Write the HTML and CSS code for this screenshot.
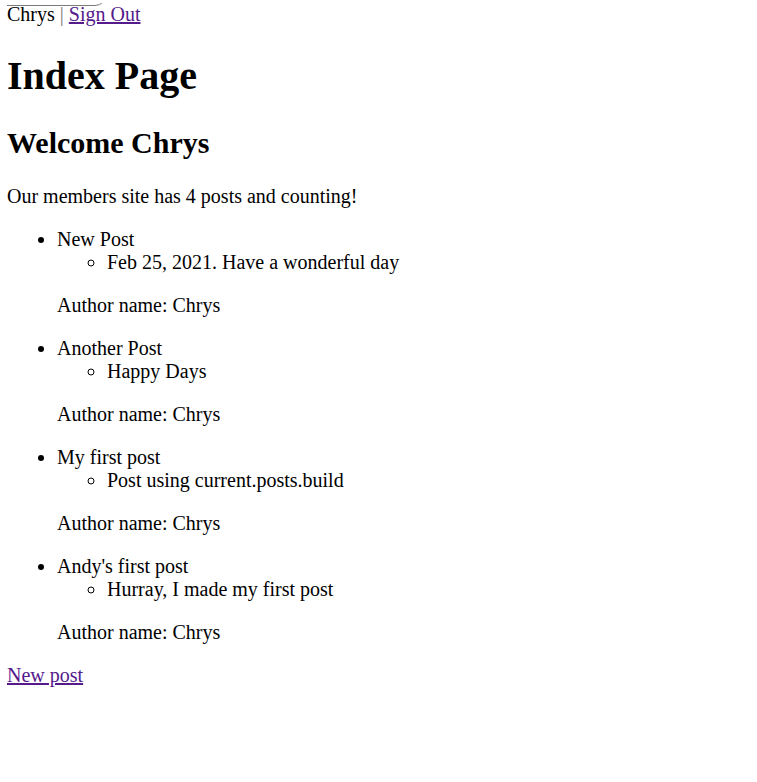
FILE: index.html
```html
<!DOCTYPE html>
<html>
<head>
<meta charset="utf-8">
<title>Index Page</title>
<link rel="stylesheet" href="styles.css">
</head>
<body>
<div class="userbar">
  <span class="frame"></span>
  <span class="user">Chrys</span> <span class="sep">|</span> <a href="#" class="link">Sign Out</a>
</div>
<h1 class="title">Index Page</h1>
<h2 class="welcome">Welcome Chrys</h2>
<p class="text">Our members site has 4 posts and counting!</p>
<ul class="posts">
  <li>New Post
    <ul class="details"><li>Feb 25, 2021. Have a wonderful day</li></ul>
    <p class="text">Author name: Chrys</p>
  </li>
  <li>Another Post
    <ul class="details"><li>Happy Days</li></ul>
    <p class="text">Author name: Chrys</p>
  </li>
  <li>My first post
    <ul class="details"><li>Post using current.posts.build</li></ul>
    <p class="text">Author name: Chrys</p>
  </li>
  <li>Andy's first post
    <ul class="details"><li>Hurray, I made my first post</li></ul>
    <p class="text">Author name: Chrys</p>
  </li>
</ul>
<a href="#" class="link">New post</a>
</body>
</html>
```
FILE: styles.css
```css
html, body {
  background: #fff;
}
body {
  margin: 3px 8px 8px 7px;
  font-family: "Liberation Serif", "Times New Roman", serif;
  font-size: 20px;
  line-height: 23px;
  color: #000;
}
.userbar {
  position: relative;
}
.frame {
  position: absolute;
  left: -30px;
  top: -40px;
  width: 128px;
  height: 41px;
  border: 1px solid #7a7a7a;
  border-radius: 12px;
}
.sep {
  color: #767676;
}
.link {
  color: #551a8b;
}
.title {
  font-size: 40px;
  line-height: 46px;
  margin: 26.8px 0;
}
.welcome {
  font-size: 30px;
  line-height: 34.5px;
  margin: 24.9px 0;
}
.text {
  margin: 20px 0;
}
.posts {
  margin: 20px 0;
  padding-left: 50px;
  list-style: disc;
}
.details {
  margin: 0;
  padding-left: 50px;
  list-style: circle;
}
```
